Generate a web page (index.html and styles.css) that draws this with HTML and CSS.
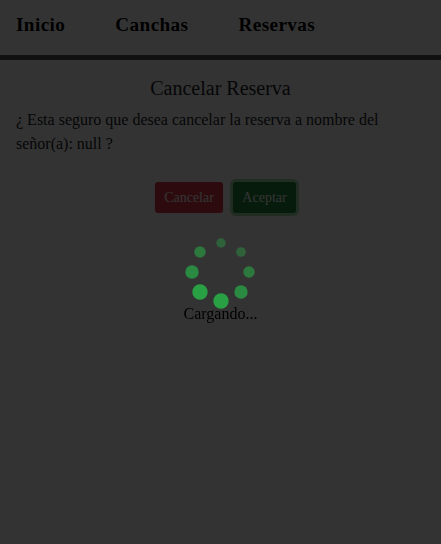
FILE: index.html
```html
<!DOCTYPE html>
<html lang="es">
<head>
<meta charset="utf-8">
<title>Cancelar Reserva</title>
<link rel="stylesheet" href="styles.css">
</head>
<body>
<nav class="nav">
  <a class="nav-link">Inicio</a>
  <a class="nav-link">Canchas</a>
  <a class="nav-link">Reservas</a>
</nav>
<main class="content">
  <h1 class="title">Cancelar Reserva</h1>
  <p class="question">¿ Esta seguro que desea cancelar la reserva a nombre del señor(a): null ?</p>
  <div class="actions">
    <button class="btn btn-danger">Cancelar</button>
    <button class="btn btn-success">Aceptar</button>
  </div>
</main>
<div class="overlay">
  <svg class="spinner" width="72" height="72" viewBox="185 237 72 72" fill="#28a745">
    <circle cx="221" cy="243" r="4.7" opacity=".4"/>
    <circle cx="241" cy="252" r="4.8" opacity=".4"/>
    <circle cx="249" cy="272" r="5.7" opacity=".6"/>
    <circle cx="241" cy="292" r="6.7" opacity=".75"/>
    <circle cx="221" cy="301" r="7.7" opacity=".95"/>
    <circle cx="200" cy="292" r="7.7" opacity=".95"/>
    <circle cx="192" cy="272" r="6.7" opacity=".75"/>
    <circle cx="200" cy="252" r="5.7" opacity=".6"/>
  </svg>
  <span class="loading">Cargando...</span>
</div>
</body>
</html>
```
FILE: styles.css
```css
* { box-sizing: border-box; }
body {
  margin: 0;
  height: 544px;
  overflow: hidden;
  background: #fff;
  color: #212529;
  font: 16px/24px "Liberation Serif", "Times New Roman", serif;
}
.nav {
  display: flex;
  gap: 50px;
  height: 60px;
  padding: 10px 16px 0;
  border-bottom: 5px solid #555;
}
.nav-link {
  color: #000;
  font-size: 19.2px;
  font-weight: bold;
  line-height: 29px;
  letter-spacing: 0.4px;
}
.content { padding: 16px 16px 0; }
.title {
  margin: 0 0 8px;
  font-size: 20px;
  font-weight: 400;
  line-height: 24px;
  text-align: center;
}
.question { margin: 0; }
.actions {
  display: flex;
  justify-content: center;
  gap: 10px;
  margin: 26px 0 0 10px;
}
.btn {
  height: 31px;
  padding: 0;
  border: 0;
  border-radius: 3px;
  color: #fff;
  font: 14px/31px "Liberation Serif", "Times New Roman", serif;
}
.btn-danger { width: 68px; background: #dc3545; }
.btn-success {
  width: 63px;
  background: #218838;
  box-shadow: 0 0 0 3px rgba(72, 180, 97, 0.5);
}
.overlay {
  position: fixed;
  inset: 0;
  display: flex;
  flex-direction: column;
  align-items: center;
  padding-top: 237px;
  background: rgba(0, 0, 0, 0.8);
}
.spinner { display: block; flex: none; }
.loading { margin-top: -7px; color: #000; }
```
